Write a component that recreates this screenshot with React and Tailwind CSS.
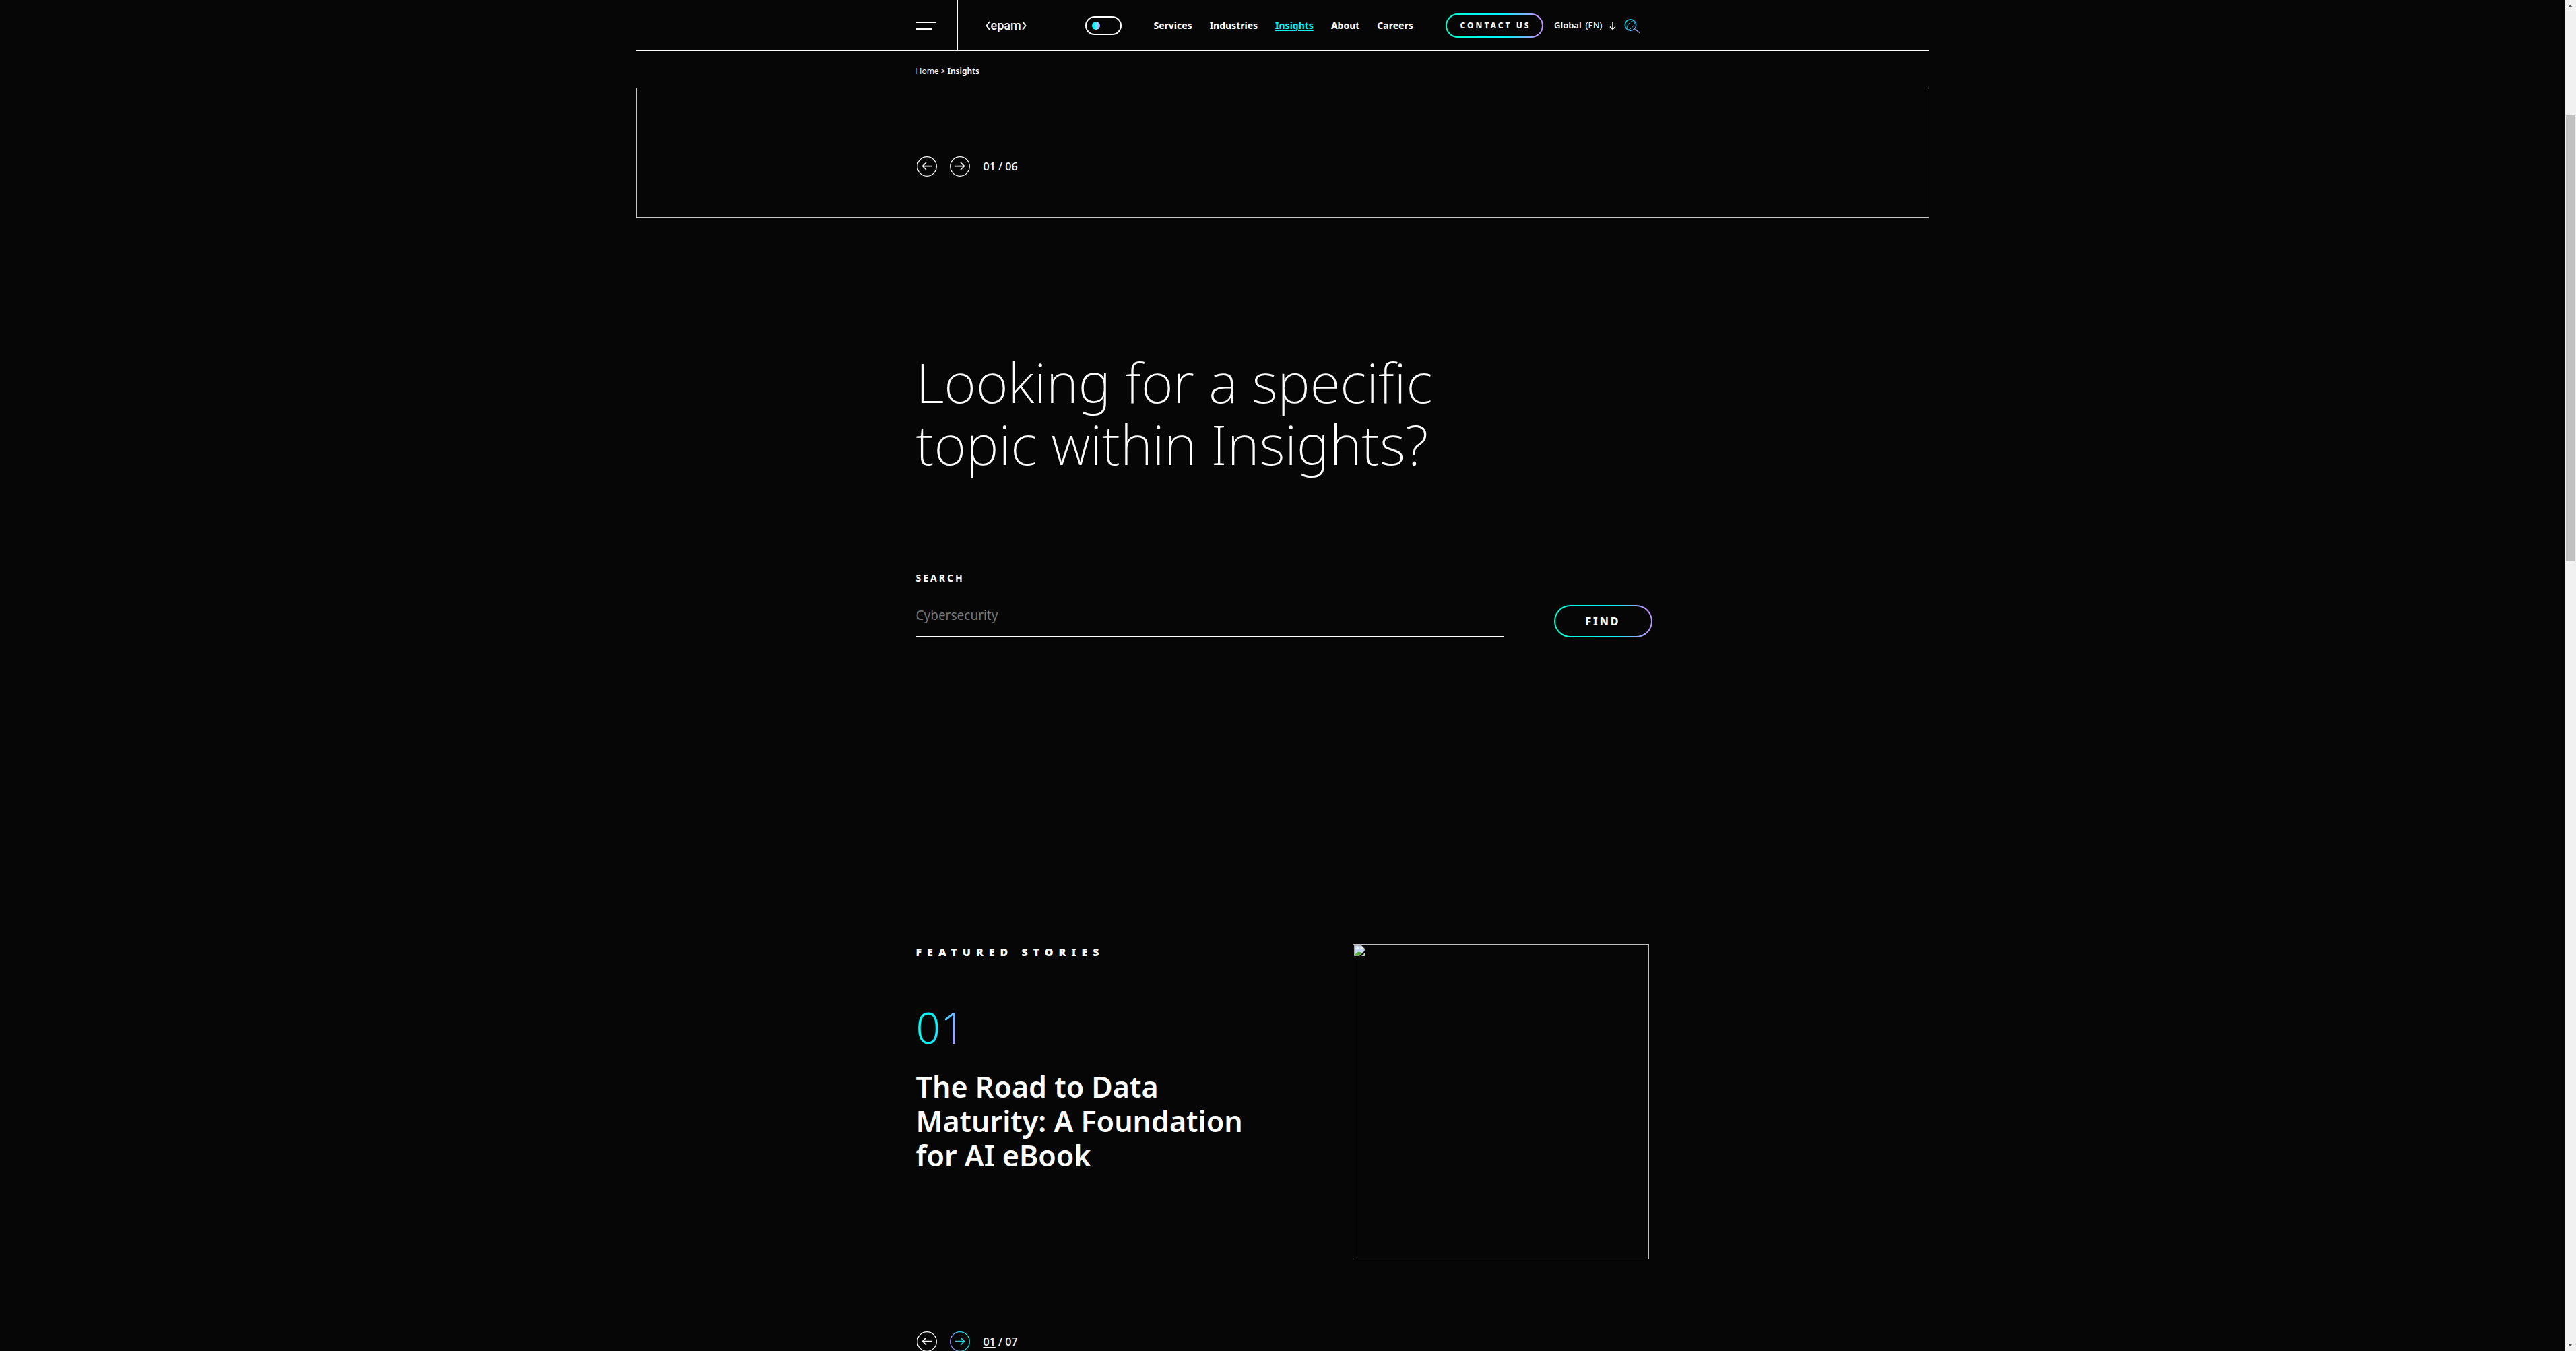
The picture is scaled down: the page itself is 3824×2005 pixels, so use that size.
const NAV = ["Services", "Industries", "Insights", "About", "Careers"];

function Logo() {
  return (
    <a href="#home" aria-label="EPAM home" className="flex h-9 items-center gap-px text-[#f4f4f4]">
      <svg viewBox="0 0 7 14" className="h-3.5 w-[7px]" fill="none" stroke="currentColor" strokeWidth="2" aria-hidden="true">
        <path d="M6 1 L1.5 7 L6 13" />
      </svg>
      <span className="font-['Roboto',sans-serif] text-lg leading-none font-medium">epam</span>
      <svg viewBox="0 0 7 14" className="h-3.5 w-[7px]" fill="none" stroke="currentColor" strokeWidth="2" aria-hidden="true">
        <path d="M1 1 L5.5 7 L1 13" />
      </svg>
    </a>
  );
}

function SearchIcon() {
  return (
    <svg viewBox="0 0 24 24" className="size-6" fill="none" stroke="url(#glass)" aria-hidden="true">
      <defs>
        <linearGradient id="glass" gradientUnits="userSpaceOnUse" x1="1" y1="4" x2="23" y2="20">
          <stop offset="0" stopColor="#00e5ee" />
          <stop offset="0.45" stopColor="#35b5e0" />
          <stop offset="1" stopColor="#b896ff" />
        </linearGradient>
      </defs>
      <circle cx="9.5" cy="11" r="8.2" strokeWidth="1.5" />
      <path d="M4 17 C3 12 9 5 14.5 4.5" />
      <path d="M5.5 18 C11 17.5 16.5 10 15.5 5.5" />
      <path d="M15.5 17 L23 22.5" strokeWidth="1.5" />
    </svg>
  );
}

function BrokenImageIcon() {
  return (
    <svg viewBox="0 0 16 16" className="size-4" aria-hidden="true">
      <path d="M0 0 H11 L16 5 V8 L8 16 H0 Z" fill="#a9a9a9" />
      <path d="M1 1 H10.5 V5.5 H15 V8 L8 15 H1 Z" fill="#c3d5f5" />
      <path d="M2.5 5.5 C2.5 4 4.5 4 4.5 3.5 C5 2.3 7 2.8 7 4 C8.3 4 8.3 5.5 7.5 5.5 Z" fill="#fff" />
      <path d="M1 15 C3 11 6 9 8.5 9.8 C10 10 10.6 11 11 12 L8 15 Z" fill="#54ae33" />
      <path d="M11 1 L15 5 H11 Z" fill="#eee" />
      <path d="M16 11 V16 H11 Z" fill="#b9c3bb" />
      <path d="M15 13 V15 H13 Z" fill="#54ae33" />
      <path d="M0 15 H8 V16 H0 Z" fill="#8e8e8e" />
    </svg>
  );
}

function ArrowCircle({ direction, accent }) {
  const stroke = accent ? "url(#accent-ring)" : "#fff";
  return (
    <svg viewBox="0 0 30 30" className="size-[30px]" fill="none" stroke={stroke} aria-hidden="true">
      <defs>
        <linearGradient id="accent-ring" gradientUnits="userSpaceOnUse" x1="0" y1="18" x2="30" y2="12">
          <stop offset="0" stopColor="#a58fff" />
          <stop offset="0.5" stopColor="#35c8ee" />
          <stop offset="1" stopColor="#00f0e6" />
        </linearGradient>
      </defs>
      <circle cx="15" cy="15" r="14.3" strokeWidth="1.3" />
      {direction === "left" ? (
        <path d="M22 14.6 H8.6 M14 9 L8.5 14.6 L14 20" strokeWidth="1.6" />
      ) : (
        <path d="M8 14.6 H21.4 M16 9 L21.5 14.6 L16 20" strokeWidth="1.6" />
      )}
    </svg>
  );
}

function SliderControls({ total, accentNext }) {
  return (
    <div className="flex items-center">
      <button type="button" aria-label="Previous slide" className="ml-px mr-[19px]">
        <ArrowCircle direction="left" />
      </button>
      <button type="button" aria-label="Next slide" className="mr-5">
        <ArrowCircle direction="right" accent={accentNext} />
      </button>
      <p className="text-base leading-6 font-medium">
        <span className="underline underline-offset-2">01</span> / {total}
      </p>
    </div>
  );
}

function Header() {
  return (
    <header className="mx-auto w-full max-w-[1920px] border-b border-white">
      <div className="mx-auto flex h-[74px] max-w-[1088px] items-center">
        <button type="button" aria-label="Menu" className="flex h-full w-[62px] shrink-0 flex-col justify-center gap-2 border-r border-white pt-0.5">
          <span className="h-0.5 w-[30px] bg-white" />
          <span className="h-0.5 w-6 bg-white" />
        </button>
        <div className="flex flex-1 items-center pt-0.5">
          <div className="ml-[41px] w-[148px]">
            <Logo />
          </div>
          <input
            type="checkbox"
            role="switch"
            aria-label="Dark mode"
            className="flex h-7 w-[54px] shrink-0 appearance-none items-center rounded-full border-2 border-white px-2 before:size-3 before:rounded-full before:bg-linear-to-r before:from-[#00f6ff] before:from-40% before:to-[#b896ff] before:content-['']"
          />
          <nav className="ml-12 flex gap-[26px] text-sm font-bold">
            {NAV.map((item) => (
              <a
                key={item}
                href={"#" + item.toLowerCase()}
                className={item === "Insights" ? "text-[#00f6ff] underline underline-offset-2" : ""}
              >
                {item}
              </a>
            ))}
          </nav>
          <div className="mr-[13px] ml-auto flex shrink-0 items-center">
            <a
              href="#contact"
              className="rounded-full bg-linear-[85deg,#00ffce_0%,#00f6ff_60%,#b896ff_92%] p-0.5 text-xs font-extrabold tracking-[3px] whitespace-nowrap"
            >
              <span className="flex h-8 w-[141px] items-center justify-center rounded-full bg-[#060606] pl-[3px]">CONTACT US</span>
            </a>
            <button type="button" className="ml-4 flex items-center gap-1.5 text-[13px]">
              <span className="font-semibold">Global</span>
              <span>(EN)</span>
              <svg viewBox="0 0 10 14" className="ml-1 h-3.5 w-2.5" fill="none" stroke="#fff" strokeWidth="1.5" aria-hidden="true">
                <path d="M5 1 V12 M1 8.5 L5 12.5 L9 8.5" />
              </svg>
            </button>
            <button type="button" aria-label="Search" className="ml-3">
              <SearchIcon />
            </button>
          </div>
        </div>
      </div>
    </header>
  );
}

function Scrollbar() {
  return (
    <div aria-hidden="true" className="flex w-[17px] shrink-0 flex-col items-center bg-[#f1f1f1]">
      <svg viewBox="0 0 17 17" className="size-[17px]">
        <path d="M5 11 L8.5 7 L12 11 Z" fill="#505050" />
      </svg>
      <div className="mt-[154px] h-[33%] w-[13px] bg-[#c1c1c1]" />
      <svg viewBox="0 0 17 17" className="mt-auto size-[17px]">
        <path d="M5 6 L8.5 10 L12 6 Z" fill="#505050" />
      </svg>
    </div>
  );
}

export default function App() {
  return (
    <div className="flex h-screen overflow-hidden bg-[#060606] font-['Noto_Sans',sans-serif] text-white">
      <div className="min-w-0 flex-1">
        <Header />
        <main>
          <div className="mx-auto max-w-[1088px]">
            <nav aria-label="Breadcrumb" className="flex h-14 items-center gap-[3px] pt-1.5 text-xs">
              <a href="#home">Home</a>
              <span>&gt;</span>
              <span className="font-semibold">Insights</span>
            </nav>
          </div>

          <section aria-label="Highlights" className="mx-auto h-48 max-w-[1920px] border-x border-b border-[#c4c4c4] pt-[101px]">
            <div className="mx-auto max-w-[1088px]">
              <SliderControls total="06" />
            </div>
          </section>

          <div className="mx-auto max-w-[1088px]">
            <h1 className="mt-[197px] max-w-[880px] text-[82px] leading-[92px] font-extralight">
              Looking for a specific topic within Insights?
            </h1>

            <form className="-mr-[5px] mt-36 flex items-end gap-[75px]" onSubmit={(e) => e.preventDefault()}>
              <div className="flex flex-1 flex-col">
                <label htmlFor="topic" className="text-sm leading-5 font-bold tracking-[3px]">
                  SEARCH
                </label>
                <input
                  id="topic"
                  type="text"
                  placeholder="Cybersecurity"
                  className="mt-5 mb-px h-[57px] border-b border-white bg-transparent pb-1.5 text-[19px] outline-none placeholder:text-[#757575]"
                />
              </div>
              <button
                type="submit"
                className="rounded-full bg-linear-[85deg,#00ffce_0%,#00f6ff_60%,#b896ff_92%] p-0.5 text-base font-extrabold tracking-[3px]"
              >
                <span className="flex h-11 w-[142px] items-center justify-center rounded-full bg-[#060606]">FIND</span>
              </button>
            </form>

            <section className="mt-[455px] flex justify-between">
              <div className="max-w-[520px]">
                <h2 className="text-base leading-6 font-black tracking-[8px]">FEATURED STORIES</h2>
                <p className="mt-[68px] w-fit bg-linear-[110deg,#00fff0_0%,#00f6ff_40%,#82b0ff_65%,#c48cff_90%] bg-clip-text text-[64px] leading-[64px] font-light text-transparent">
                  01
                </p>
                <h3 className="mt-[30px] text-[43px] leading-[51px] font-semibold">
                  The Road to Data Maturity: A Foundation for AI eBook
                </h3>
              </div>
              <div role="img" aria-label="Featured story cover" className="h-[468px] w-[440px] border border-[#c0c0c0] p-px">
                <BrokenImageIcon />
              </div>
            </section>
            <div className="mt-[107px]">
              <SliderControls total="07" accentNext />
            </div>
          </div>
        </main>
      </div>
      <Scrollbar />
    </div>
  );
}
